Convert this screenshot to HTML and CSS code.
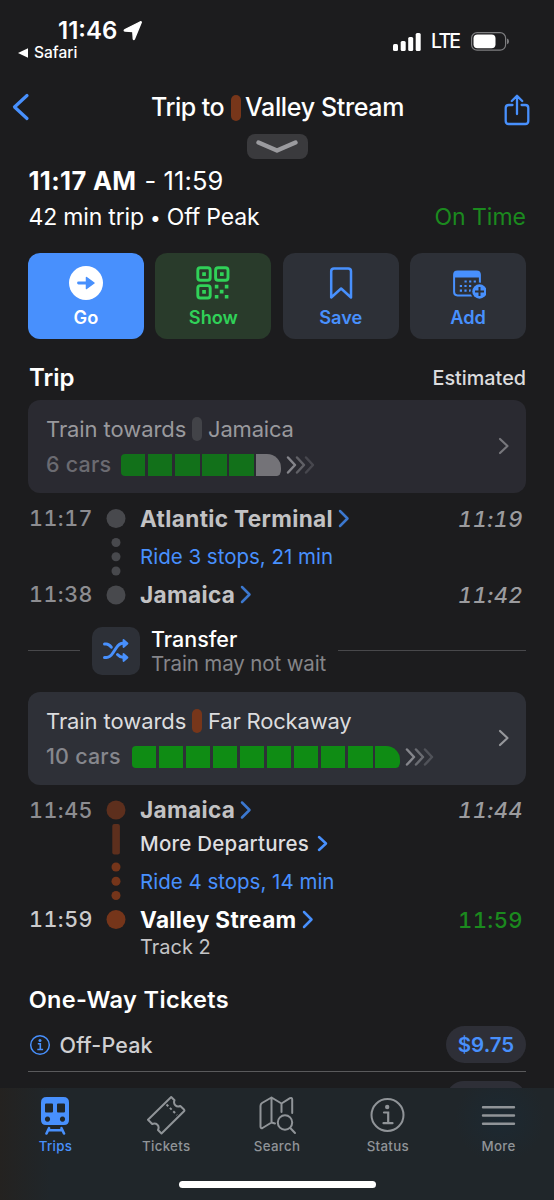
FILE: index.html
```html
<!DOCTYPE html>
<html lang="en">
<head>
<meta charset="utf-8">
<title>Trip to Valley Stream</title>
<link rel="stylesheet" href="styles.css">
</head>
<body>
<div class="screen">
  <header class="status-bar">
    <div class="status-left">
      <div class="clock"><span class="clock-time">11:46</span>
        <svg width="20" height="20" viewBox="0 0 20 20"><path d="M18.200 1.500 11.400 18q-.6 1-1.100 0L9.800 10.600 2 10q-1.600-.5 0-1.400L17 1q1.500-.6 1.200.500z" fill="#fff" stroke="#fff" stroke-width="1.400" stroke-linejoin="round"/></svg>
      </div>
      <div class="back-app"><svg width="11" height="10" viewBox="0 0 11 10"><path d="M0 5 10 .2v9.600z" fill="#fff"/></svg><span>Safari</span></div>
    </div>
    <div class="status-right">
      <svg class="signal" width="28" height="18" viewBox="0 0 28 18" fill="#fff"><rect x="0" y="11" width="5" height="7" rx="1.500"/><rect x="7.700" y="8" width="5" height="10" rx="1.500"/><rect x="15.200" y="4" width="5" height="14" rx="1.500"/><rect x="22.700" y="0" width="5" height="18" rx="1.500"/></svg>
      <span class="network">LTE</span>
      <svg width="39" height="19" viewBox="0 0 39 19"><rect x=".6" y=".6" width="34" height="17.600" rx="5.500" fill="none" stroke="#7e7e80" stroke-width="1.200"/><rect x="2.500" y="2.500" width="22" height="13.700" rx="4" fill="#fff"/><path d="M36 6.500q2 .8 2 2.900t-2 2.900z" fill="#7e7e80"/></svg>
    </div>
  </header>

  <nav class="nav-bar">
    <svg class="nav-back" width="18" height="28" viewBox="0 0 18 28"><path d="M15 2.500 2.500 14 15 25.500" fill="none" stroke="#4890fd" stroke-width="3.200" stroke-linecap="round" stroke-linejoin="round"/></svg>
    <h1 class="nav-title"><span class="title-a">Trip to</span><i class="line-tag"></i><span class="title-b">Valley Stream</span></h1>
    <svg class="nav-share" width="26" height="32" viewBox="0 0 26 32" fill="none" stroke="#4890fd" stroke-width="2.300" stroke-linecap="round" stroke-linejoin="round"><path d="M8.500 11H4.800Q1.700 11 1.700 14v13q0 3 3 3h16.600q3 0 3-3V14q0-3-3-3h-3.700M13 20V2M7.800 7 13 1.700 18.200 7"/></svg>
  </nav>
  <div class="grabber"><svg width="42" height="14" viewBox="0 0 42 14"><path d="M2.500 2.500 21 10.500 39.500 2.500" fill="none" stroke="#9b9b9f" stroke-width="4.400" stroke-linecap="round" stroke-linejoin="round"/></svg></div>

  <main class="content">
    <div class="times"><b>11:17 AM</b><span class="until">- 11:59</span></div>
    <div class="summary"><span class="summary-text">42 min trip<span class="bullet">•</span>Off Peak</span><span class="on-time">On Time</span></div>

    <div class="actions">
      <button class="action go"><svg width="36" height="36" viewBox="0 0 36 36"><circle cx="18" cy="18" r="17" fill="#fff"/><path d="M10.500 18h9" stroke="#4890fd" stroke-width="2.800" stroke-linecap="round"/><path d="M18.500 12.500 26 18l-7.500 5.500z" fill="#4890fd" stroke="#4890fd" stroke-width="1.500" stroke-linejoin="round"/></svg><span>Go</span></button>
      <button class="action show"><svg width="36" height="36" viewBox="0 0 36 36" fill="none" stroke="#30d158" stroke-width="2.900"><rect x="2.800" y="2.800" width="12.400" height="12.400" rx="2.500"/><rect x="20.600" y="2.800" width="12.400" height="12.400" rx="2.500"/><rect x="2.800" y="20.600" width="12.400" height="12.400" rx="2.500"/><path stroke="none" fill="#30d158" d="M7.200 7.200h3.700v3.700H7.200zM25 7.200h3.700v3.700H25zM7.200 25h3.700v3.700H7.200zM19.800 19.800h3.600v3.600h-3.600zM29.800 19.800h3.600v3.600h-3.600zM24.800 24.800h3.700v3.700h-3.700zM19.800 30h3.600v3.600h-3.600zM29.800 30h3.600v3.600h-3.600z"/></svg><span>Show</span></button>
      <button class="action"><svg width="36" height="36" viewBox="0 0 36 36"><path d="M8.200 32.500V6.300Q8.200 3.500 11 3.500h14.200Q28 3.500 28 6.300V32.500L18.100 23.500z" fill="none" stroke="#4890fd" stroke-width="2.500" stroke-linejoin="round"/></svg><span>Save</span></button>
      <button class="action"><svg width="36" height="36" viewBox="0 0 36 36"><path d="M22.500 30.400H7.500q-3.400 0-3.400-3.300V9.700q0-3.300 3.400-3.300h19q3.400 0 3.400 3.300V19" fill="none" stroke="#4890fd" stroke-width="2"/><path d="M4 12.500V9.700q0-3.300 3.500-3.300h19q3.500 0 3.500 3.300v2.800z" fill="#4890fd"/><path d="M14.500 16.500h13M9.800 21h14.500M9.800 25.600h12" stroke="#4890fd" stroke-width="2.200" stroke-dasharray="2.200 2.400"/><circle cx="29.500" cy="26.500" r="9" fill="#2d3037"/><circle cx="29.500" cy="26.500" r="7.200" fill="#4890fd"/><path d="M25 26.500h9M29.500 22v9" stroke="#2d3037" stroke-width="2"/></svg><span>Add</span></button>
    </div>

    <div class="section-head"><h2>Trip</h2><span class="estimated">Estimated</span></div>

    <section class="train dim">
      <div class="train-info">
        <div class="train-name"><span class="towards">Train towards</span><i class="line-tag"></i><span class="dest">Jamaica</span></div>
        <div class="cars-row"><span class="cars-label">6 cars</span>
          <div class="cars"><i></i><i></i><i></i><i></i><i></i><i class="unknown"></i></div>
          <svg class="speed" width="30" height="20" viewBox="0 0 30 20" fill="none" stroke="#85858b" stroke-width="2.500" stroke-linecap="round" stroke-linejoin="round"><path d="M2 2.500 9 10l-7 7.500"/><path d="M11 2.500 18 10l-7 7.500" opacity=".6"/><path d="M20 2.500 27 10l-7 7.500" opacity=".32"/></svg></div>
      </div>
      <svg class="go-in" width="12" height="18" viewBox="0 0 12 18"><path d="M2 2 9.500 9 2 16"/></svg>
    </section>

    <div class="stops">
      <svg class="rail" width="20" height="114" viewBox="0 0 20 114" fill="#48494d"><circle cx="10" cy="18.500" r="9.500"/><circle cx="10" cy="42.500" r="4.500"/><circle cx="10" cy="56.700" r="4.500"/><circle cx="10" cy="71" r="4.500"/><circle cx="10" cy="95" r="9.500"/></svg>
      <div class="stop"><time>11:17</time><span class="name n-atlantic">Atlantic Terminal</span><svg class="chev" width="12" height="20" viewBox="0 0 12 20"><path d="M2 2 9.500 9.500 2 17"/></svg><em>11:19</em></div>
      <div class="stop"><span class="ride">Ride 3 stops, 21 min</span></div>
      <div class="stop"><time>11:38</time><span class="name n-jamaica">Jamaica</span><svg class="chev" width="12" height="20" viewBox="0 0 12 20"><path d="M2 2 9.500 9.500 2 17"/></svg><em>11:42</em></div>
    </div>

    <div class="transfer">
      <span class="rule rule-left"></span>
      <div class="shuffle"><svg width="30" height="26" viewBox="0 0 30 26" fill="none" stroke="#4890fd" stroke-width="3" stroke-linecap="round" stroke-linejoin="round"><path d="M3.500 6h1.800q2.500 0 5 3.200M3.500 19.500h2q3.500 0 6.700-5l3-4.500q3-4.700 7-4.700h1M16.500 16.500q2.500 2.800 5.500 2.800h1.500"/><path d="M22.500 2 26.500 5.500 22.500 9zM22.500 16 26.500 19.500 22.500 23z" fill="#4890fd" stroke-width="1.800"/></svg></div>
      <div class="transfer-text"><span class="transfer-title">Transfer</span><span class="transfer-note">Train may not wait</span></div>
      <span class="rule rule-right"></span>
    </div>

    <section class="train">
      <div class="train-info">
        <div class="train-name"><span class="towards">Train towards</span><i class="line-tag"></i><span class="dest">Far Rockaway</span></div>
        <div class="cars-row"><span class="cars-label ten">10 cars</span>
          <div class="cars"><i></i><i></i><i></i><i></i><i></i><i></i><i></i><i></i><i></i><i></i></div>
          <svg class="speed" width="30" height="20" viewBox="0 0 30 20" fill="none" stroke="#85868c" stroke-width="2.500" stroke-linecap="round" stroke-linejoin="round"><path d="M2 2.500 9 10l-7 7.500"/><path d="M11 2.500 18 10l-7 7.500" opacity=".7"/><path d="M20 2.500 27 10l-7 7.500" opacity=".4"/></svg></div>
      </div>
      <svg class="go-in" width="12" height="18" viewBox="0 0 12 18"><path d="M2 2 9.500 9 2 16"/></svg>
    </section>

    <div class="stops">
      <svg class="rail" width="20" height="167" viewBox="0 0 20 167" fill="#75351a"><circle cx="10" cy="18" r="9.500" fill="#5d2f1d"/><rect x="6.300" y="32" width="7.600" height="30.500" rx="2" fill="#5d2f1d"/><circle cx="10" cy="75" r="4.500"/><circle cx="10" cy="89.200" r="4.500"/><circle cx="10" cy="103.500" r="4.500"/><circle cx="10" cy="127.500" r="9.500"/></svg>
      <div class="stop h37"><time>11:45</time><span class="name n-jamaica">Jamaica</span><svg class="chev" width="12" height="20" viewBox="0 0 12 20"><path d="M2 2.500 9.500 10 2 17.500"/></svg><em>11:44</em></div>
      <div class="stop h30"><span class="more-dep">More Departures</span><svg class="chev bright" width="12" height="20" viewBox="0 0 12 20"><path d="M2 3 9 9.500 2 16"/></svg></div>
      <div class="stop h46"><span class="ride">Ride 4 stops, 14 min</span></div>
      <div class="stop h30"><time class="lit">11:59</time><span class="name n-valley">Valley Stream</span><svg class="chev bright" width="12" height="20" viewBox="0 0 12 20"><path d="M2 2 9.500 9.500 2 17"/></svg><em class="good">11:59</em></div>
      <div class="stop h24"><span class="track">Track 2</span></div>
    </div>

    <h2 class="tickets-title">One-Way Tickets</h2>
    <div class="fare"><svg width="22" height="22" viewBox="0 0 22 22"><circle cx="11" cy="11" r="9.300" fill="none" stroke="#4890fd" stroke-width="1.500"/><circle cx="11" cy="6.400" r="1.500" fill="#4890fd"/><path d="M8.800 9.700h2.500v5.700M8.300 15.500h5.800" fill="none" stroke="#4890fd" stroke-width="1.600"/></svg><span class="fare-name">Off-Peak</span><span class="price">$9.75</span></div>
    <div class="fare next"><span class="price"></span></div>
  </main>

  <footer class="tab-bar">
    <div class="tabs">
      <a class="tab active"><svg width="40" height="40" viewBox="0 0 40 40"><path d="M11.500 2h17q5.500 0 5.500 5.500V25q0 5-5 5H11q-5 0-5-5V7.500Q6 2 11.500 2zM10 9.500v7q0 1 1 1h6q1 0 1-1v-7q0-1-1-1h-6q-1 0-1 1zm12 0v7q0 1 1 1h6q1 0 1-1v-7q0-1-1-1h-6q-1 0-1 1zM12.500 21.500a2.600 2.600 0 1 0 .01 0zm15 0a2.600 2.600 0 1 0 .01 0z" fill="#4890fd" fill-rule="evenodd"/><path d="M14 33.200 11.500 38.500M26.500 33.200 29 38.500M13 35.300h14.500" stroke="#4890fd" stroke-width="2.600" stroke-linecap="round"/></svg><span>Trips</span></a>
      <a class="tab"><svg width="40" height="40" viewBox="0 0 40 40" fill="none" stroke="#909498" stroke-width="2" stroke-linejoin="round"><path d="M25.200 2 28.500 5.200q-1.200 3 .8 5t5 .8L38 14.500Q38.800 15.500 38 16.300L15.500 38.500 12 35q1.500-3.300-.6-5.200T6.200 29L2 24.700z"/><path d="M20.500 9.500 31 20" stroke-dasharray="2.500 2.300"/></svg><span>Tickets</span></a>
      <a class="tab"><svg width="40" height="40" viewBox="0 0 40 40" fill="none" stroke="#909498" stroke-width="2" stroke-linejoin="round" stroke-linecap="round"><path d="M18 28.500 14.500 27.500 5.500 33Q3.500 33.700 3.500 31.500V11Q3.500 9 5 8L14.500 2.500 24.500 8.500 33 3.200Q35.200 2.200 35.200 4.500V18M14.500 2.500v25M24.500 8.500V17"/><circle cx="28" cy="27.500" r="7.200"/><path d="M33.300 33 38 38"/></svg><span>Search</span></a>
      <a class="tab"><svg width="40" height="40" viewBox="0 0 40 40"><circle cx="19.500" cy="20" r="16" fill="none" stroke="#909498" stroke-width="2"/><circle cx="19.200" cy="12" r="2.200" fill="#909498"/><path d="M16 17.500h4.200v10.500M15.500 28.200h9" fill="none" stroke="#909498" stroke-width="2.200" stroke-linecap="round"/></svg><span>Status</span></a>
      <a class="tab"><svg width="40" height="40" viewBox="0 0 40 40" stroke="#909498" stroke-width="2.400" stroke-linecap="round"><path d="M4 12.200h31M4 20.500h31M4 28.800h31"/></svg><span>More</span></a>
    </div>
    <div class="home-indicator"></div>
  </footer>
</div>
</body>
</html>
```
FILE: styles.css
```css
* { box-sizing: border-box; }
body { margin: 0; background: #1c1c1e; }
.screen {
  width: 554px;
  height: 1200px;
  overflow: hidden;
  display: flex;
  flex-direction: column;
  background: #1c1c1e;
  color: #fff;
  font-family: Inter, "Liberation Sans", sans-serif;
  line-height: 1;
  white-space: nowrap;
}
svg { display: block; flex: none; }
h1, h2 { margin: 0; font-size: inherit; }
i, em { flex: none; }

/* status bar */
.status-bar { height: 80px; flex: none; display: flex; justify-content: space-between; padding: 18px 44px 0 18px; }
.clock { display: flex; align-items: center; height: 26px; padding-left: 40px; gap: 5px; }
.clock-time { font-size: 24px; font-weight: 600; letter-spacing: 0; width: 60px; }
.back-app { display: flex; align-items: center; gap: 5px; height: 17px; font-size: 15.500px; font-weight: 500; letter-spacing: 0; }
.back-app span { padding-top: 1px; }
.status-right { display: flex; align-items: center; height: 47px; }
.network { font-size: 19.500px; font-weight: 500; letter-spacing: -1.800px; width: 40px; margin-left: 10.500px; padding-top: 1px; }

/* navigation */
.nav-bar { height: 54px; flex: none; display: flex; justify-content: space-between; padding: 0 24px 0 12px; }
.nav-back { margin-top: 13px; }
.nav-title { display: flex; align-items: center; height: 55px; font-size: 25px; font-weight: 500; margin-left: 22px; }
.title-a { letter-spacing: -0.500px; width: 80px; }
.title-b { letter-spacing: -0.350px; margin-left: 4px; width: 160px; }
.line-tag { width: 10px; height: 26px; border-radius: 5px; background: #77361a; }
.nav-share { margin-top: 14px; }
.grabber { align-self: center; width: 61px; height: 25px; flex: none; border-radius: 8px; background: #3a3a3d; display: flex; align-items: center; justify-content: center; }

.content { flex: 1; min-height: 0; overflow: hidden; padding: 4px 28px 0; }
.times { display: flex; align-items: center; height: 36px; font-size: 25.500px; padding-left: 0.500px; }
.times b { font-weight: 700; letter-spacing: 0.350px; width: 116px; }
.until { letter-spacing: 0.100px; }
.summary { display: flex; align-items: center; justify-content: space-between; height: 36px; font-size: 23px; }
.summary-text { letter-spacing: -0.180px; padding-left: 0.500px; }
.bullet { display: inline-block; width: 23px; text-align: center; font-size: 19px; }
.on-time { color: #1b8a1e; }

.actions { display: grid; grid-template-columns: repeat(4, 1fr); gap: 11.500px; margin-top: 18px; }
.action {
  height: 86px;
  border: 0;
  border-radius: 12px;
  padding: 12px 0 0;
  display: flex;
  flex-direction: column;
  align-items: center;
  gap: 7px;
  background: #2d3037;
  color: #4890fd;
  font: 600 18.200px/1 Inter, "Liberation Sans", sans-serif;
}
.action.go { background: #4890fd; color: #fff; }
.action.show { background: #293b2b; color: #30d158; }

.section-head { display: flex; align-items: center; justify-content: space-between; height: 61px; padding: 16px 0 0 1px; }
.section-head h2 { font-size: 24px; font-weight: 600; }
.estimated { font-size: 19.800px; font-weight: 500; color: #dcdcde; padding-top: 2px; }

.train { display: flex; align-items: center; justify-content: space-between; height: 92.500px; border-radius: 12px; padding: 0 16px 0 18px; background: #2e3037; }
.train.dim { background: #2a2a31; }
.train-info { padding-top: 2px; }
.train-name { display: flex; align-items: center; height: 35px; font-size: 22px; color: #dcdcde; }
.towards { width: 146px; letter-spacing: -0.080px; }
.dest { letter-spacing: -0.180px; }
.train-name .line-tag { height: 24px; margin-right: 6px; }
.dim .line-tag { background: #424348; }
.dim .train-name { color: #99999d; }
.cars-row { display: flex; align-items: center; height: 36px; font-size: 21.500px; font-weight: 500; color: #86878d; }
.dim .cars-row { color: #6b6b71; }
.cars-label { width: 75px; letter-spacing: 0.200px; }
.cars-label.ten { width: 85.500px; }
.cars { display: flex; gap: 2.700px; }
.cars i { width: 24.400px; height: 22px; background: #0f8c14; }
.cars i:first-child { border-radius: 4px 0 0 4px; }
.cars i:last-child { border-radius: 0 14px 4px 0 / 0 14px 6px 0; }
.dim .cars i { background: #12711a; }
.dim .cars i.unknown { background: #747378; }
.speed { margin-left: 5px; }
.go-in { fill: none; stroke: #96979b; stroke-width: 2.200; stroke-linecap: round; stroke-linejoin: round; }
.dim .go-in { stroke: #77777c; }

/* stop lists, with the rail drawn over the gutter between times and names */
.stops { position: relative; padding-top: 7px; }
.rail { position: absolute; left: 77.500px; bottom: 0; }
.stop { display: flex; align-items: center; height: 38px; padding: 0 3px 0 112px; }
.stop time, .stop span { padding-top: 1px; }
.stop time { width: 112px; margin-left: -112px; padding-left: 1px; font-size: 21.500px; font-weight: 500; color: #8d8d91; letter-spacing: 0.500px; font-feature-settings: "tnum"; }
.stop time.lit { color: #cbcbcd; }
.stop em { margin-left: auto; font-size: 22px; font-weight: 500; color: #9b9b9e; letter-spacing: 0.400px; font-feature-settings: "tnum"; }
.stop em.good { font-style: normal; color: #1b8a1e; }
.name { font-size: 22.600px; font-weight: 700; letter-spacing: 0.350px; color: #c2c2c4; }
.n-atlantic { width: 198px; }
.n-jamaica { width: 99.500px; }
.n-valley { width: 162px; color: #fff; }
.chev { fill: none; stroke: #3c78cf; stroke-width: 2.500; stroke-linecap: round; stroke-linejoin: round; }
.chev.bright { stroke: #4890fd; }
.ride { font-size: 20.500px; color: #4890fd; }
.more-dep { font-size: 20.500px; font-weight: 500; letter-spacing: 0.230px; color: #dedee0; width: 177px; }
.track { font-size: 20px; color: #c4c4c6; }
.h37 { height: 37px; }
.h30 { height: 30px; }
.h46 { height: 46px; }
.h24 { height: 24px; }

.transfer { display: flex; align-items: center; height: 48px; margin: 13px 0 17.500px; }
.rule { height: 1.500px; background: #48484b; }
.rule-left { width: 52px; }
.rule-right { flex: 1; }
.shuffle { width: 48px; height: 48px; margin: 0 11px 0 12px; border-radius: 10px; background: #2d3037; display: flex; align-items: center; justify-content: center; }
.transfer-text { display: flex; flex-direction: column; width: 187px; gap: 3px; padding-top: 2px; }
.transfer-title { font-size: 21.500px; font-weight: 500; }
.transfer-note { font-size: 20.500px; letter-spacing: -0.130px; color: #858589; }

.tickets-title { font-size: 23.500px; font-weight: 600; letter-spacing: 0.350px; margin-top: 29px; padding-left: 0.700px; }
.fare { display: flex; align-items: center; height: 54px; margin-top: 7px; border-bottom: 1.500px solid #5a5a5c; padding-left: 1px; }
.fare-name { margin-left: 8.500px; padding-top: 2px; font-size: 21.500px; font-weight: 500; letter-spacing: 0.150px; color: #cfcfd1; }
.price { margin-left: auto; width: 80px; height: 36.500px; border-radius: 19px; background: #2e2f37; color: #4890fd; font-size: 20.500px; font-weight: 600; display: flex; align-items: center; justify-content: center; padding-top: 1px; }
.fare.next { margin-top: 0; border: 0; }

.tab-bar { flex: none; height: 112px; display: flex; flex-direction: column; align-items: center; background: radial-gradient(circle at 500px 30px, #1c2932 0, #1c293200 45px), linear-gradient(90deg, #242220 0, #20262a 50px, #20262a 100%); }
.tabs { display: grid; grid-template-columns: repeat(5, 1fr); align-self: stretch; }
.tab { display: flex; flex-direction: column; align-items: center; padding-top: 7px; gap: 5px; color: #909498; font-size: 13.300px; font-weight: 500; letter-spacing: 0.300px; }
.tab.active { color: #4890fd; }
.home-indicator { width: 197px; height: 7px; border-radius: 4px; background: #fff; margin-top: 28px; }
```
